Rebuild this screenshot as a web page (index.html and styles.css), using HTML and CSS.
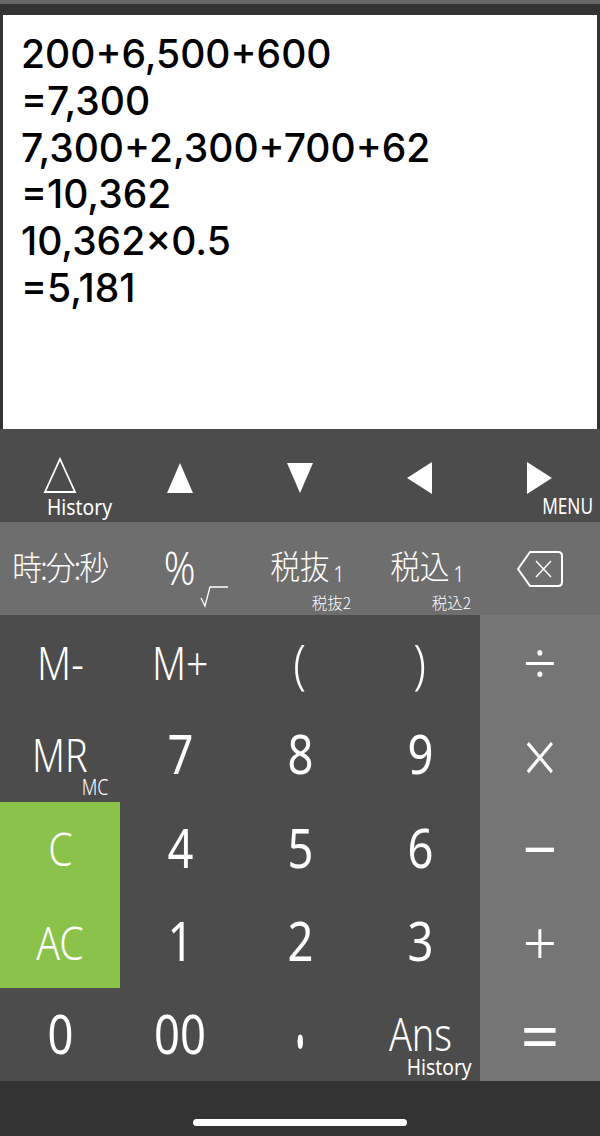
FILE: index.html
```html
<!DOCTYPE html>
<html lang="ja">
<head>
    <meta charset="UTF-8">
    <meta name="viewport" content="width=device-width, initial-scale=1.0">
    <title>電卓</title>
    <link rel="stylesheet" href="styles.css">
</head>
<body>
    <div class="app">
        <div class="display">
            <div>200+6,500+600</div>
            <div>=7,300</div>
            <div>7,300+2,300+700+62</div>
            <div>=10,362</div>
            <div>10,362×0.5</div>
            <div>=5,181</div>
        </div>

        <div class="row nav-row">
            <div class="key">
                <svg class="arrow-outline" width="34" height="36" viewBox="0 0 34 36"><path d="M17 2 L32 35 H2 Z" fill="none" stroke="#fff" stroke-width="1.8"/></svg>
                <span class="sub sub-history">History</span>
            </div>
            <div class="key"><svg class="arrow" width="26" height="32" viewBox="0 0 26 32"><path d="M13 1 L26 31 H0 Z" fill="#fff"/></svg></div>
            <div class="key"><svg class="arrow" width="26" height="32" viewBox="0 0 26 32"><path d="M0 1 H26 L13 31 Z" fill="#fff"/></svg></div>
            <div class="key"><svg class="arrow" width="26" height="32" viewBox="0 0 26 32"><path d="M0 16 L25 0 V32 Z" fill="#fff"/></svg></div>
            <div class="key">
                <svg class="arrow" width="26" height="32" viewBox="0 0 26 32"><path d="M0 0 L25 16 L0 32 Z" fill="#fff"/></svg>
                <span class="sub sub-menu">MENU</span>
            </div>
        </div>

        <div class="row func-row">
            <div class="key"><span class="jp jp-time">時:分:秒</span></div>
            <div class="key">
                <span class="label percent">%</span>
                <svg class="root" width="30" height="22" viewBox="0 0 30 22"><path d="M1 12 L5 20 L10 1 H28" fill="none" stroke="#fff" stroke-width="1.3"/></svg>
            </div>
            <div class="key">
                <span class="jp jp-tax">税抜<small>1</small></span>
                <span class="sub sub-tax">税抜2</span>
            </div>
            <div class="key">
                <span class="jp jp-tax">税込<small>1</small></span>
                <span class="sub sub-tax">税込2</span>
            </div>
            <div class="key">
                <svg width="46" height="36" viewBox="0 0 46 36"><path d="M13 1 H41 Q45 1 45 5 V31 Q45 35 41 35 H13 L1 18 Z" fill="none" stroke="#fff" stroke-width="2" stroke-linejoin="round"/><path d="M19 10 L34 26 M34 10 L19 26" stroke="#fff" stroke-width="1.4"/></svg>
            </div>
        </div>

        <div class="keypad">
            <div class="key"><span class="label">M-</span></div>
            <div class="key"><span class="label">M+</span></div>
            <div class="key"><span class="label paren">(</span></div>
            <div class="key"><span class="label paren">)</span></div>
            <div class="key op"><span class="label thin">÷</span></div>

            <div class="key"><span class="label label-up">MR</span><span class="sub sub-mc">MC</span></div>
            <div class="key"><span class="label digit">7</span></div>
            <div class="key"><span class="label digit">8</span></div>
            <div class="key"><span class="label digit">9</span></div>
            <div class="key op"><span class="label thin times">×</span></div>

            <div class="key clear"><span class="label">C</span></div>
            <div class="key"><span class="label digit">4</span></div>
            <div class="key"><span class="label digit">5</span></div>
            <div class="key"><span class="label digit">6</span></div>
            <div class="key op"><span class="label">−</span></div>

            <div class="key clear"><span class="label">AC</span></div>
            <div class="key"><span class="label digit">1</span></div>
            <div class="key"><span class="label digit">2</span></div>
            <div class="key"><span class="label digit">3</span></div>
            <div class="key op"><span class="label thin">+</span></div>

            <div class="key"><span class="label digit">0</span></div>
            <div class="key"><span class="label digit">00</span></div>
            <div class="key"><span class="label digit dot">·</span></div>
            <div class="key"><span class="label label-up">Ans</span><span class="sub sub-ans">History</span></div>
            <div class="key op"><span class="label equals">=</span></div>
        </div>

        <div class="home-bar"><div class="home-pill"></div></div>
    </div>
</body>
</html>
```

FILE: styles.css
```css
html, body {
    margin: 0;
    padding: 0;
}
body {
    background-color: #333;
    font-family: "Noto Sans", "Noto Sans CJK JP", sans-serif;
    color: #fff;
}
.app {
    width: 600px;
    height: 1136px;
    display: flex;
    flex-direction: column;
    box-sizing: border-box;
    background-color: #333;
    border-top: 4px solid #666;
    padding-top: 11px;
}
.display {
    height: 414px;
    box-sizing: border-box;
    margin: 0 3px;
    padding: 16px 18px;
    background-color: #fff;
    color: #000;
    font-family: Inter, "Liberation Sans", sans-serif;
    font-size: 39px;
    font-weight: 500;
    line-height: 46.8px;
}
.row {
    display: grid;
    grid-template-columns: repeat(5, 120px);
}
.nav-row {
    height: 93px;
    background-color: #4c4c4c;
}
.func-row {
    height: 93px;
    background-color: #6e6e6e;
}
.keypad {
    display: grid;
    grid-template-columns: repeat(5, 120px);
    grid-auto-rows: 93.3px;
    background-color: #4c4c4c;
}
.key {
    position: relative;
    display: flex;
    align-items: center;
    justify-content: center;
}
.op {
    background-color: #757575;
}
.op .label {
    font-size: 60px;
    font-weight: 400;
    transform: none;
}
.op .thin {
    font-weight: 300;
}
.op .times {
    transform: scaleY(1.2);
}
.op .equals {
    font-size: 68px;
}
.clear {
    background-color: #8bc34a;
}
.label {
    display: block;
    font-size: 46px;
    font-weight: 300;
    line-height: 1;
    transform: scaleX(0.85);
}
.label-up {
    line-height: 0.8;
    margin-top: -2px;
    transform: scaleX(0.82);
}
.digit {
    font-weight: 400;
    font-size: 54px;
    margin-top: -3px;
    transform: scaleX(0.84);
}
.dot {
    margin-top: 6px;
    transform: scale(0.8, 2);
}
.paren {
    font-size: 54px;
}
.percent {
    margin-top: -3px;
}
.jp {
    font-family: "Noto Sans CJK JP", sans-serif;
    font-size: 33px;
    font-weight: 300;
    line-height: 1;
    white-space: nowrap;
    margin-top: -4px;
    transform: scaleX(0.9);
}
.jp small {
    font-family: "Noto Sans", sans-serif;
    font-size: 22px;
    font-weight: 300;
    margin-left: 4px;
    vertical-align: -3px;
}
.jp-tax {
    margin-left: 15px;
}
.jp-time {
    letter-spacing: -2px;
}
.arrow {
    margin-top: 5px;
}
.arrow-outline {
    margin-top: -1px;
}
.sub {
    position: absolute;
    font-weight: 400;
    line-height: 1;
    white-space: nowrap;
}
.sub-history {
    left: 47px;
    bottom: 4px;
    font-size: 21px;
    transform: scaleX(0.92);
    transform-origin: left;
}
.sub-menu {
    right: 7px;
    bottom: 5px;
    font-size: 21px;
    transform: scaleX(0.82);
    transform-origin: right;
}
.sub-tax {
    right: 9px;
    bottom: 5px;
    font-family: "Noto Sans CJK JP", sans-serif;
    font-size: 15.5px;
    font-weight: 300;
}
.sub-mc {
    right: 12px;
    bottom: 4px;
    font-size: 21px;
    font-weight: 300;
    transform: scaleX(0.85);
    transform-origin: right;
}
.sub-ans {
    right: 8px;
    bottom: 3px;
    font-size: 21px;
    transform: scaleX(0.92);
    transform-origin: right;
}
.root {
    position: absolute;
    left: 80px;
    bottom: 7px;
}
.home-bar {
    flex: 1;
    display: flex;
    align-items: flex-end;
    justify-content: center;
    padding-bottom: 10px;
}
.home-pill {
    width: 214px;
    height: 7px;
    border-radius: 4px;
    background-color: #fff;
}
```
